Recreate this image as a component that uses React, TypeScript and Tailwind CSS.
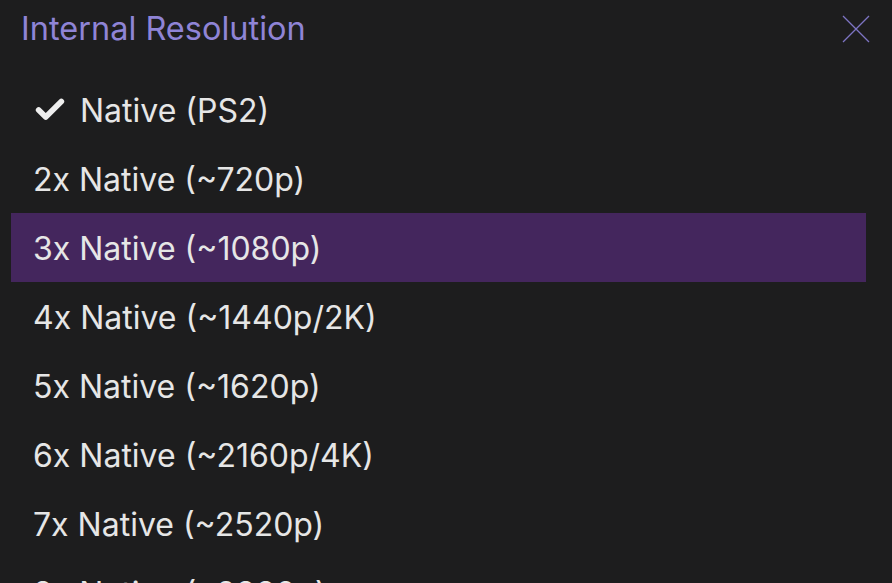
import { Check } from "lucide-react";

const options = [
  "Native (PS2)",
  "2x Native (~720p)",
  "3x Native (~1080p)",
  "4x Native (~1440p/2K)",
  "5x Native (~1620p)",
  "6x Native (~2160p/4K)",
  "7x Native (~2520p)",
  "8x Native (~2880p)",
];

export default function App() {
  const selected = 0;
  const hovered = 2;
  return (
    <div
      className="w-[892px] h-[583px] overflow-hidden bg-[#1d1d1e] text-[#e6e6e6]"
      style={{ fontFamily: "Inter, 'Liberation Sans', sans-serif" }}
    >
      <div className="h-[75px] flex items-start justify-between pl-[21px] pr-[22px] pt-[9px]">
        <h2 className="text-[32.5px] leading-[40px] text-[#8f84d6]">Internal Resolution</h2>
        <button aria-label="close" className="mt-[6px] w-[28px] h-[28px] flex items-center justify-center">
          <svg width="28" height="28" viewBox="0 0 28 28">
            <path d="M1 1 L27 27 M27 1 L1 27" stroke="#7d74c4" strokeWidth="1.3" fill="none" />
          </svg>
        </button>
      </div>
      <ul className="px-[11px] pr-[26px]">
        {options.map((o, i) => (
          <li
            key={o}
            className={`h-[69px] flex items-center px-[22px] pt-[3px] text-[32px] leading-none ${
              i === hovered ? "bg-[#44265d]" : ""
            }`}
          >
            {i === selected && (
              <Check className="w-[34px] h-[34px] mr-[13px] -mt-[3px]" strokeWidth={4} color="#eeeeee" />
            )}
            {o}
          </li>
        ))}
      </ul>
    </div>
  );
}
